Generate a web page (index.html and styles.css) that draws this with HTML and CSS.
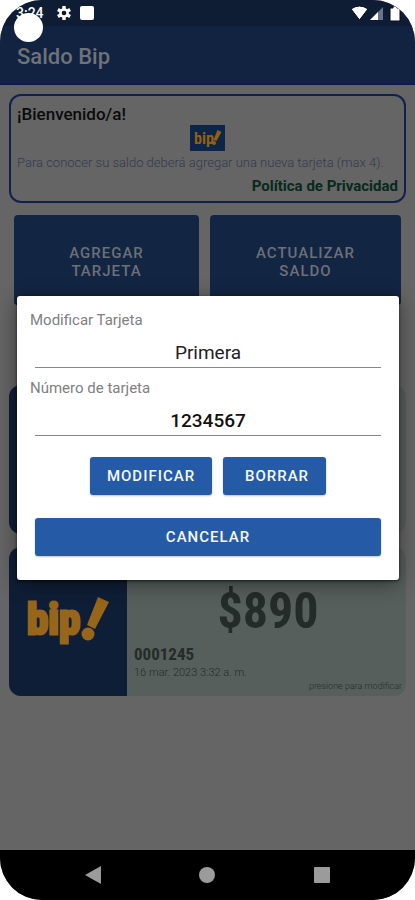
FILE: index.html
```html
<!DOCTYPE html>
<html lang="es">
<head>
<meta charset="utf-8">
<meta name="viewport" content="width=device-width, initial-scale=1">
<title>Saldo Bip</title>
<link rel="stylesheet" href="styles.css">
</head>
<body>
<div class="phone">
  <div class="status">
    <span class="clock">3:24</span>
    <svg class="gear" viewBox="0 0 16 16" aria-hidden="true">
      <g stroke="#fff" stroke-width="3.4"><path d="M8 1v14M1.9 4.5l12.2 7M1.9 11.5l12.2-7"/></g>
      <circle cx="8" cy="8" r="4.8" fill="#fff"/><circle cx="8" cy="8" r="2.3" fill="#0a1428"/>
    </svg>
    <span class="status-square"></span>
    <svg class="signals" viewBox="0 0 52 18" aria-hidden="true">
      <path d="M2 5Q10.500 -1 19 5L10.500 16Z" fill="#fff" stroke="#050b16"/>
      <path d="M34 3V16H21Z" fill="#667388"/><path d="M29 8V16H21Z" fill="#fff"/>
      <path d="M41 4h3V2h4v2h3v13H41Z" fill="#fff" stroke="#050b16"/>
    </svg>
    <span class="camera"></span>
  </div>
  <header class="appbar"><h1>Saldo Bip</h1></header>

  <main class="content">
    <section class="welcome">
      <h2>¡Bienvenido/a!</h2>
      <svg class="mini-logo" viewBox="0 0 35 26" role="img" aria-label="bip!">
        <text class="logo-text" x="4" y="19" font-size="16">bip</text>
        <path d="M27.500 5l4 2-5 9-3-1Z"/><circle cx="24" cy="18" r="2"/>
      </svg>
      <p>Para conocer su saldo deberá agregar una nueva tarjeta (max 4).</p>
      <a href="#privacidad">Política de Privacidad</a>
    </section>
    <div class="actions">
      <button type="button">AGREGAR<br>TARJETA</button>
      <button type="button">ACTUALIZAR<br>SALDO</button>
    </div>
    <div class="cards">
      <article class="card"><div class="brand"></div><div class="info"></div></article>
      <article class="card">
        <div class="brand">
          <svg class="logo" viewBox="0 0 84 64" role="img" aria-label="bip!">
            <text class="logo-text" x="1" y="44" font-size="43" stroke-width="3">bip</text>
            <path d="M72 7L83 12L69 39L61 35Z"/><circle cx="62" cy="44" r="6.500"/>
          </svg>
        </div>
        <div class="info">
          <strong class="amount">$890</strong>
          <span class="number">0001245</span>
          <time datetime="2023-03-16">16 mar. 2023 3:32 a. m.</time>
          <small>presione para modificar</small>
        </div>
      </article>
    </div>
  </main>

  <nav class="navbar">
    <button type="button" aria-label="Atrás"><svg viewBox="0 0 18 18"><path d="M1 9L17 0V18Z"/></svg></button>
    <button type="button" aria-label="Inicio"><svg viewBox="0 0 18 18"><circle cx="9" cy="9" r="8"/></svg></button>
    <button type="button" aria-label="Recientes"><svg viewBox="0 0 18 18"><rect x="1" y="1" width="16" height="16" rx="1"/></svg></button>
  </nav>

  <div class="overlay">
    <form class="dialog" role="dialog" aria-label="Modificar Tarjeta">
      <label for="name">Modificar Tarjeta</label>
      <input id="name" type="text" value="Primera">
      <label for="num">Número de tarjeta</label>
      <input id="num" class="strong" type="text" value="1234567">
      <div class="pair">
        <button type="button" class="modify">MODIFICAR</button>
        <button type="button" class="erase">BORRAR</button>
      </div>
      <button type="button" class="cancel">CANCELAR</button>
    </form>
  </div>
</div>
</body>
</html>
```
FILE: styles.css
```css
* { box-sizing: border-box; }
body { margin: 0; background: #fff; font-family: Roboto, "Liberation Sans", sans-serif; }
h1, h2, p { margin: 0; }
button { font-family: inherit; border: 0; padding: 0; }

.phone {
  position: relative;
  min-height: 100vh;
  display: flex;
  flex-direction: column;
  background: #656565;
  border-radius: 42px;
  overflow: hidden;
}

.status { position: relative; height: 26px; padding: 4px 14px 0 16px; display: flex; background: #0e1d34; }
.clock { width: 40px; color: #fff; font-size: 14px; line-height: 18px; font-weight: 500; }
.gear { width: 16px; height: 18px; }
.status-square { width: 14px; height: 14px; margin: 2px 0 0 8px; background: #fff; border-radius: 2px; }
.signals { width: 52px; height: 18px; margin-left: auto; }
.camera { position: absolute; left: 14px; top: 13px; width: 29px; height: 29px; border-radius: 50%; background: #fff; z-index: 2; }

.appbar { height: 59px; padding: 3px 17px 0; display: flex; align-items: center; background: #122341; border-bottom: 1px solid #0a1a48; }
h1 { color: #6f7278; font-size: 22px; line-height: 26px; font-weight: 500; }

.content { flex: 1; padding: 9px 9px 0; }
.welcome {
  display: flex; flex-direction: column;
  height: 109px; padding: 8px 6px 0;
  border: 2px solid #11214f; border-radius: 12px;
}
h2 { color: #0b0b0b; font-size: 17px; line-height: 20px; font-weight: 500; }
.mini-logo { width: 35px; height: 26px; margin-top: 1px; align-self: center; background: #0d2548; fill: #94600f; }
.welcome p { color: #333a50; font-size: 13px; line-height: 24px; font-weight: 300; white-space: nowrap; }
.welcome a { align-self: flex-end; color: #08291e; font-size: 15px; line-height: 22px; font-weight: 700; text-decoration: none; }

.actions { display: grid; grid-template-columns: 185fr 191fr; gap: 11px; padding: 12px 5px 0; }
.actions button {
  height: 90px; border-radius: 4px; border-bottom: 1px solid #0a0f3c;
  background: #122543; color: #6c7078;
  font-size: 15px; line-height: 18px; font-weight: 500; letter-spacing: 1px;
  padding-top: 4px;
}

.cards { display: flex; flex-direction: column; gap: 13px; margin-top: 80px; }
.card { display: grid; grid-template-columns: 118px 1fr; height: 149px; border-radius: 12px; overflow: hidden; background: #575f5c; }
.brand { display: flex; align-items: center; justify-content: center; background: #0f1e37; }
.logo { width: 84px; height: 64px; fill: #98661a; }
.logo .logo-text { stroke: #98661a; }
.logo-text { font-family: "Roboto Condensed", "Liberation Sans Narrow", sans-serif; font-weight: 700; }
.info { display: flex; flex-direction: column; padding: 34px 4px 0 7px; color: #252b29; }
.amount { align-self: center; font-family: "Roboto Condensed", "Liberation Sans Narrow", sans-serif; font-size: 50px; line-height: 60px; }
.number { font-family: "Roboto Condensed", "Liberation Sans Narrow", sans-serif; font-size: 17px; line-height: 26px; font-weight: 700; }
.info time { font-size: 11px; line-height: 12px; font-weight: 300; }
.info small { align-self: flex-end; font-size: 9px; line-height: 14px; font-weight: 300; }

.navbar { height: 50px; padding: 0 36px; display: flex; justify-content: space-around; align-items: center; background: #000; }
.navbar button { display: flex; background: none; }
.navbar svg { width: 18px; height: 18px; fill: #9b9b9b; }

.overlay { position: absolute; inset: 25px 0 50px; padding: 0 16px 0 17px; display: grid; align-items: center; }
.dialog {
  display: flex; flex-direction: column;
  padding: 14px 18px 24px;
  background: #fff; border-radius: 3px;
  box-shadow: 0 4px 20px rgba(0, 0, 0, .45), 0 1px 3px rgba(0, 0, 0, .6);
}
.dialog label { margin-left: -5px; color: #808080; font-size: 15px; line-height: 20px; }
.dialog input {
  width: 100%; height: 38px; padding: 8px 0 0; margin-bottom: 10px;
  border: 0; border-bottom: 1px solid #888; background: none;
  font-family: inherit; font-size: 19px; text-align: center; color: #222;
}
.dialog .strong { font-weight: 500; color: #111; }
.dialog button {
  height: 38px; border-radius: 3px; background: #255ba6; color: #f4f7fc;
  font-size: 15px; font-weight: 500; letter-spacing: 1px;
  box-shadow: 0 1px 2px rgba(0, 0, 0, .25);
}
.pair { display: flex; justify-content: center; gap: 11px; margin-top: 11px; margin-bottom: 23px; }
.dialog .modify { width: 122px; }
.dialog .erase { width: 103px; padding-left: 5px; }
```
